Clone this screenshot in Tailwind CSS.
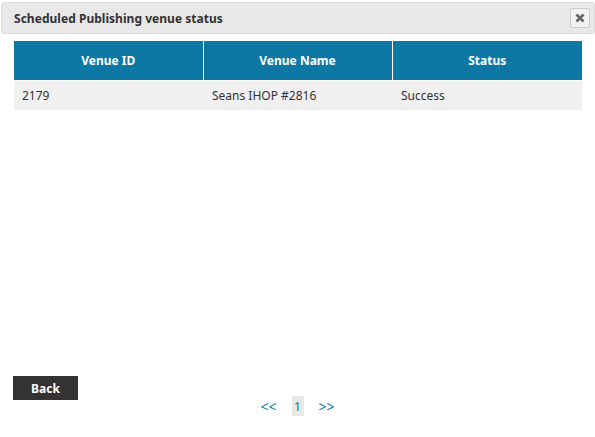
<!DOCTYPE html>
<html>
<head>
    <title>Venue status</title>
    <script src="https://cdn.jsdelivr.net/npm/@tailwindcss/browser@4"></script>
</head>
<body class="bg-white h-[437px] overflow-hidden font-['Noto_Sans',sans-serif]">
    <div class="pt-[2px] pl-[1px]">
        <div class="h-[32px] flex items-center justify-between bg-[#e8e8e8] border border-[#dddddd] rounded-[3px] pl-[12px] pr-[4px]">
            <span class="pt-[1px] text-[12px] font-bold text-[#333333] tracking-[0.03px]">Scheduled Publishing venue status</span>
            <button class="w-[20px] h-[20px] flex items-center justify-center bg-[#f2f2f2] border border-[#cccccc] rounded-[3px]">
                <svg width="10" height="10" viewBox="0 0 10 10"><path d="M1.5 1.5L8.5 8.5M8.5 1.5L1.5 8.5" stroke="#666666" stroke-width="2.6" /></svg>
            </button>
        </div>
    </div>
    <div class="pl-[14px] pt-[7px] w-[582px]">
        <table class="w-[568px] table-fixed border-collapse text-[12px]">
            <thead>
                <tr class="h-[39px] bg-[#0e78a4] text-white font-bold border-b border-white">
                    <th class="w-[189px] pt-[1px] border-r border-white">Venue ID</th>
                    <th class="w-[189px] pt-[1px] border-r border-white">Venue Name</th>
                    <th class="pt-[1px]">Status</th>
                </tr>
            </thead>
            <tbody>
                <tr class="h-[30px] bg-[#f0f0f0] text-[#333333]">
                    <td class="pl-[8px] pt-[2px]">2179</td>
                    <td class="pl-[9px] pt-[2px]">Seans IHOP #2816</td>
                    <td class="pl-[9px] pt-[2px]">Success</td>
                </tr>
            </tbody>
        </table>
    </div>
    <div class="pl-[13px] pt-[266px]">
        <button class="block w-[65px] h-[24px] pt-[2px] bg-[#333333] text-white text-[12px] font-bold">Back</button>
        <div class="flex items-start justify-center w-[595px] -ml-[13px] -mt-[4px] text-[12px] text-[#0e78a4]">
            <a class="mr-[15px] text-[14px]">&lt;&lt;</a>
            <a class="w-[12px] h-[20px] pt-[1px] flex items-center justify-center bg-[#e8e8e8] mr-[15px]">1</a>
            <a class="text-[14px]">&gt;&gt;</a>
        </div>
    </div>
</body>
</html>
